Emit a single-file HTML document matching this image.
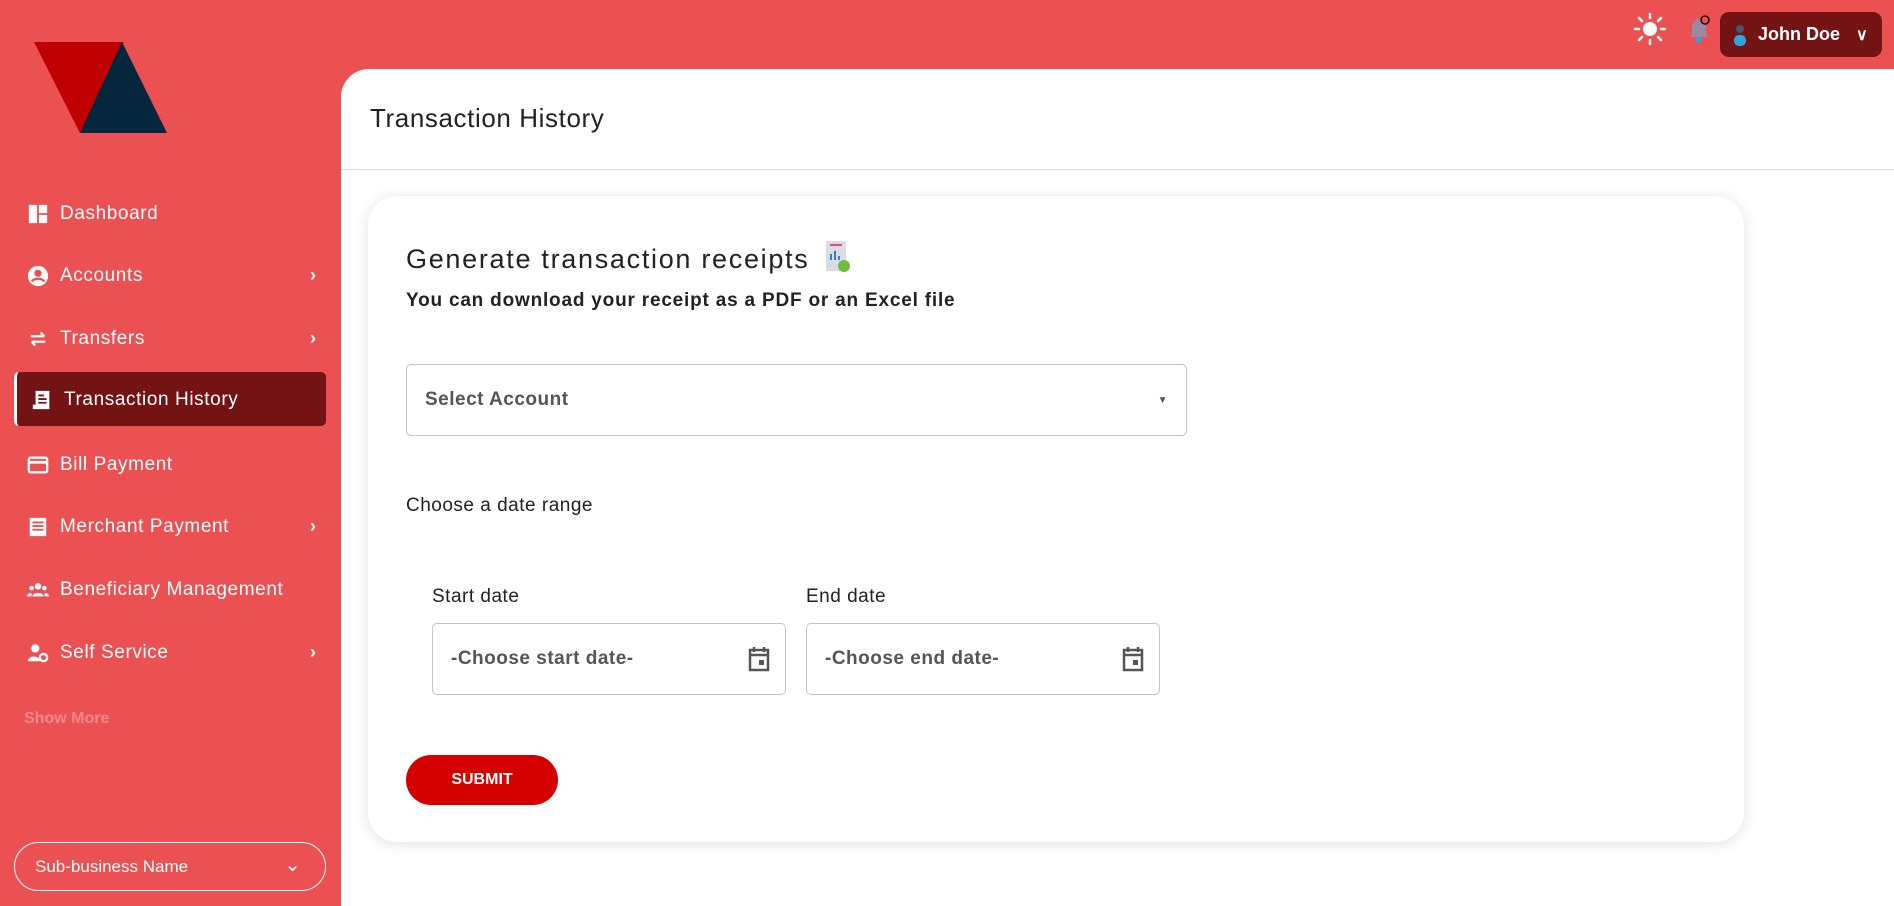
<!DOCTYPE html>
<html><head><meta charset="utf-8"><style>
*{box-sizing:border-box;margin:0;padding:0}
body{width:1894px;height:906px;overflow:hidden;background:#eb5052;font-family:"Liberation Sans",sans-serif;position:relative}
.nav{position:absolute;left:27px;color:#fff;font-size:19px;display:flex;align-items:center;letter-spacing:0.6px}
.nav svg{width:22px;height:22px;margin-right:11px}
.chev{position:absolute;left:310px;color:#fff;font-size:18px;font-weight:bold}
.main{position:absolute;left:341px;top:69px;right:0;bottom:0;background:#fff;border-top-left-radius:28px}
.card{position:absolute;left:368px;top:196px;width:1376px;height:646px;background:#fff;border-radius:29px;box-shadow:0 2px 14px rgba(0,0,0,.12)}
.inp{position:absolute;border:1px solid #c4c4c4;border-radius:5px;background:#fff;color:#555;font-size:19px;font-weight:bold;display:flex;align-items:center;padding-left:18px;letter-spacing:0.5px}
</style></head><body>
<svg style="position:absolute;left:0;top:0" width="200" height="150"><polygon points="34,42 124,42 80,133" fill="#c00000"/><polygon points="122,42 167,133 80,133" fill="#04273d"/></svg>

<div class="nav" style="top:203px"><svg viewBox="0 0 24 24"><path fill="#fff" d="M2 2h9v20H2zM13 2h9v9h-9zM13 13h9v9h-9z"/></svg>Dashboard</div>
<div class="nav" style="top:265px"><svg viewBox="0 0 24 24"><circle cx="12" cy="12" r="11" fill="#fff"/><circle cx="12" cy="9" r="4" fill="#eb5052"/><path d="M5 18c3-4 11-4 14 0" stroke="#eb5052" stroke-width="2.5" fill="none"/></svg>Accounts</div><div class="chev" style="top:265px">›</div>
<div class="nav" style="top:328px"><svg viewBox="0 0 24 24"><path d="M4 9h15M15 5l4 4M20 15H5M9 19l-4-4" stroke="#fff" stroke-width="2.5" fill="none"/></svg>Transfers</div><div class="chev" style="top:328px">›</div>
<div style="position:absolute;left:14px;top:372px;width:312px;height:54px;background:#731314;border-radius:5px;border-left:3px solid #fff"></div>
<div class="nav" style="top:389px;left:31px"><svg viewBox="0 0 24 24"><path fill="#fff" d="M5 2h15v20H5zM2 17h3v5H2z"/><path d="M8 7h6M8 11h9M8 15h9" stroke="#731314" stroke-width="2"/></svg>Transaction History</div>
<div class="nav" style="top:454px"><svg viewBox="0 0 24 24"><rect x="2" y="4" width="20" height="16" rx="2" stroke="#fff" stroke-width="2.5" fill="none"/><path d="M2 9h20" stroke="#fff" stroke-width="3"/></svg>Bill Payment</div>
<div class="nav" style="top:516px"><svg viewBox="0 0 24 24"><path fill="#fff" d="M3 2h18v20H3z"/><path d="M6 7h12M6 11h12M6 15h12" stroke="#eb5052" stroke-width="2"/></svg>Merchant Payment</div><div class="chev" style="top:516px">›</div>
<div class="nav" style="top:579px"><svg viewBox="0 0 24 24"><circle cx="12" cy="8" r="3.5" fill="#fff"/><circle cx="5" cy="10" r="2.5" fill="#fff"/><circle cx="19" cy="10" r="2.5" fill="#fff"/><path fill="#fff" d="M6 19c0-5 12-5 12 0zM0 19c0-4 5-4 5-3v3zM24 19c0-4-5-4-5-3v3z"/></svg>Beneficiary Management</div>
<div class="nav" style="top:642px"><svg viewBox="0 0 24 24"><circle cx="9" cy="7" r="4.5" fill="#fff"/><path fill="#fff" d="M1 21c0-7 13-7 13 0z"/><circle cx="18" cy="17" r="4" stroke="#fff" stroke-width="2.5" fill="none"/></svg>Self Service</div><div class="chev" style="top:642px">›</div>
<div style="position:absolute;left:24px;top:710px;color:#f5898a;font-size:16px;font-weight:bold">Show More</div>
<div style="position:absolute;left:14px;top:842px;width:312px;height:49px;border:1px solid #fff;border-radius:25px;color:#fff;font-size:17px;padding:14px 0 0 20px">Sub-business Name<span style="position:absolute;right:24px;top:9px;font-size:20px">⌄</span></div>

<svg style="position:absolute;left:1633px;top:12px" width="34" height="34" viewBox="0 0 34 34"><circle cx="17" cy="17" r="7" fill="#fff"/><g stroke="#fff" stroke-width="2.5" stroke-linecap="round"><path d="M17 2v4M17 28v4M2 17h4M28 17h4M6 6l3 3M25 25l3 3M6 28l3-3M25 9l3-3"/></g></svg>
<svg style="position:absolute;left:1685px;top:12px" width="30" height="34" viewBox="0 0 30 34"><path d="M5 25c2-2 2-5 2-10s3-8 7-8 7 3 7 8 0 8 2 10z" fill="#9b8a9e"/><circle cx="14" cy="28" r="3" fill="#2aa7d8"/><circle cx="20" cy="8" r="4" fill="#eb5052" stroke="#000" stroke-width="1.3"/></svg>
<div style="position:absolute;left:1720px;top:12px;width:162px;height:45px;background:#731314;border-radius:9px;color:#fff;font-weight:bold;font-size:18px;display:flex;align-items:center;padding-left:12px"><svg width="16" height="24" viewBox="0 0 16 24"><circle cx="8" cy="6" r="4" fill="#3d5878"/><rect x="2" y="12" width="12" height="11" rx="5" fill="#2aa7d8"/></svg><span style="margin-left:10px">John Doe</span><span style="margin-left:16px;font-size:16px">∨</span></div>

<div class="main">
<div style="position:absolute;left:29px;top:34px;font-size:26px;color:#222;letter-spacing:0.6px">Transaction History</div>
<div style="position:absolute;left:0;right:0;top:100px;border-top:1px solid #ddd"></div>
</div>
<div class="card">
<div style="position:absolute;left:38px;top:44px;font-size:27px;color:#222;letter-spacing:1.7px">Generate transaction receipts <svg width="26" height="34" viewBox="0 0 26 34" style="vertical-align:-6px;margin-left:6px"><rect x="1" y="1" width="20" height="30" fill="#d9dde3"/><path d="M5 5h12" stroke="#e0507a" stroke-width="2"/><path d="M6 20v-6M10 20v-9M14 20v-4" stroke="#3b7fc4" stroke-width="2"/><circle cx="19" cy="26" r="6" fill="#6fbb3a"/></svg></div>
<div style="position:absolute;left:38px;top:94px;font-size:19px;font-weight:bold;color:#222;letter-spacing:0.8px">You can download your receipt as a PDF or an Excel file</div>
<div class="inp" style="left:38px;top:168px;width:781px;height:72px">Select Account<span style="position:absolute;right:18px;font-size:10px;color:#555">▼</span></div>
<div style="position:absolute;left:38px;top:299px;font-size:19px;color:#222;letter-spacing:0.5px">Choose a date range</div>
<div style="position:absolute;left:64px;top:390px;font-size:19px;color:#222;letter-spacing:0.5px">Start date</div>
<div style="position:absolute;left:438px;top:390px;font-size:19px;color:#222;letter-spacing:0.5px">End date</div>
<div class="inp" style="left:64px;top:427px;width:354px;height:72px">-Choose start date-<svg style="position:absolute;right:14px" width="24" height="26" viewBox="0 0 24 26"><path d="M3 4h18v20H3zM3 9h18M7 1v5M17 1v5" stroke="#555" stroke-width="2.5" fill="none"/><rect x="12" y="14" width="5" height="5" fill="#555"/></svg></div>
<div class="inp" style="left:438px;top:427px;width:354px;height:72px">-Choose end date-<svg style="position:absolute;right:14px" width="24" height="26" viewBox="0 0 24 26"><path d="M3 4h18v20H3zM3 9h18M7 1v5M17 1v5" stroke="#555" stroke-width="2.5" fill="none"/><rect x="12" y="14" width="5" height="5" fill="#555"/></svg></div>
<div style="position:absolute;left:38px;top:559px;width:152px;height:50px;background:#d50000;border-radius:25px;color:#fff;font-weight:bold;font-size:16px;text-align:center;line-height:50px">SUBMIT</div>
</div>
</body></html>
